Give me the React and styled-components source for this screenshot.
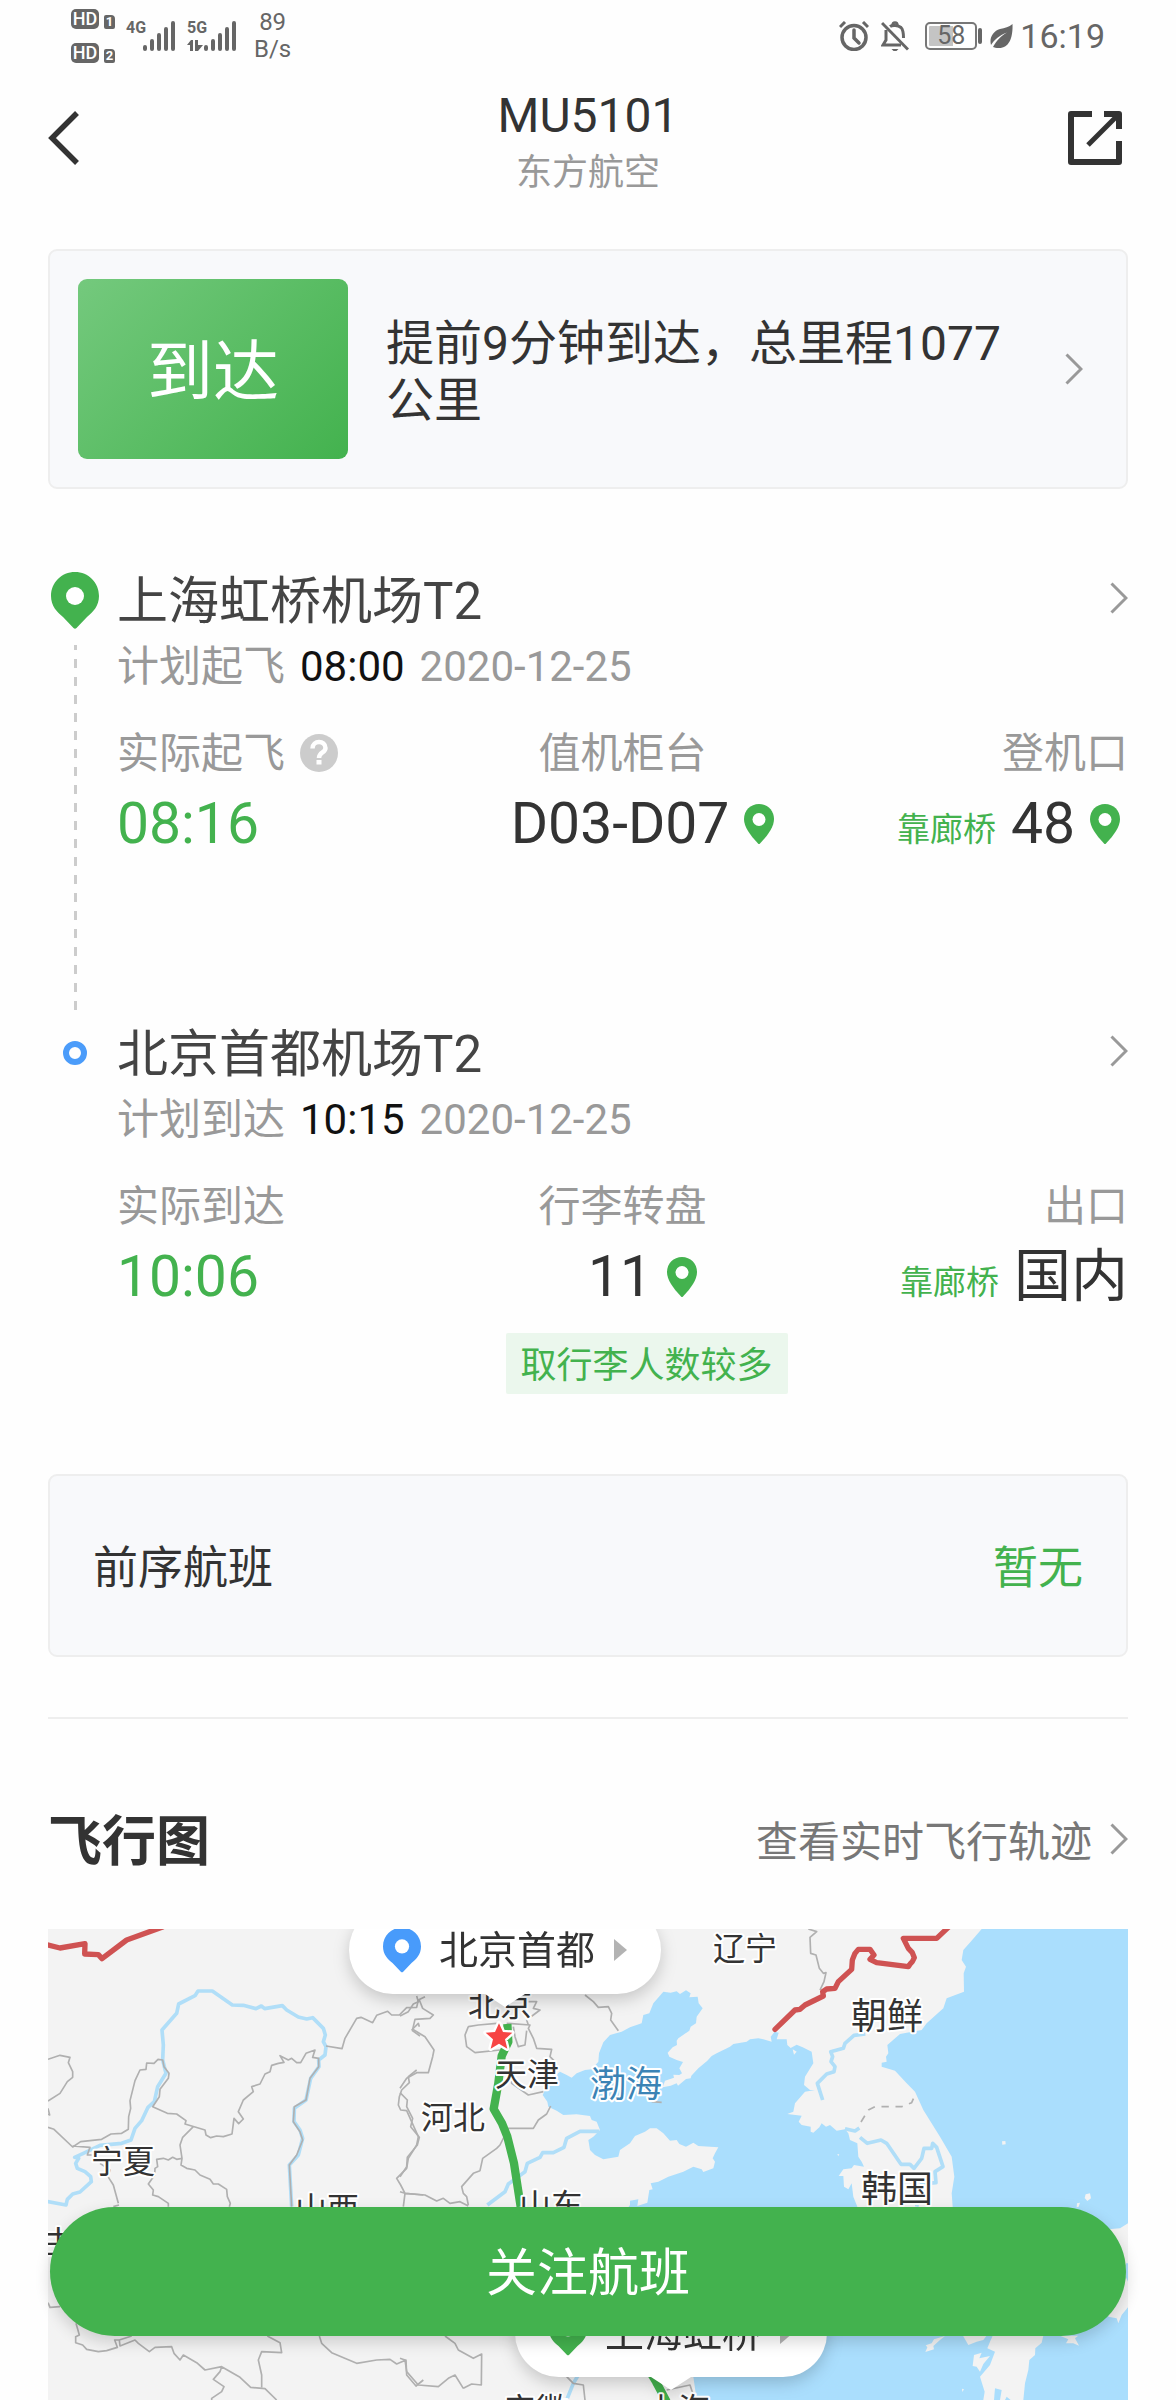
import React from "react";
import styled, { createGlobalStyle } from "styled-components";

const GREEN = "#43b24e";

function Chevron({ className }) {
  return (
    <svg className={className} width={18} height={32} viewBox="0 0 18 32" fill="none">
      <path d="M1.5 1.5L16 16L1.5 30.5" stroke="#999" strokeWidth={3} />
    </svg>
  );
}

function PlacePin() {
  return (
    <svg width={46} height={40} viewBox="0 0 46 40">
      <path
        d="M23 0C31.500 0 38 6.500 38 15C38 23 32 31 24 39.500Q23 40.500 22 39.500C14 31 8 23 8 15C8 6.500 14.500 0 23 0Z"
        fill={GREEN}
      />
      <circle cx={23} cy={15.500} r={6.500} fill="#fff" />
    </svg>
  );
}

function MapPin({ color, width, height }) {
  return (
    <svg width={width} height={height} viewBox="0 0 48 57">
      <path
        d="M24 0C37.500 0 48 10.500 48 24C48 34 42 40 36 45L25.500 56Q24 57.500 22.500 56L12 45C6 40 0 34 0 24C0 10.500 10.500 0 24 0Z"
        fill={color}
      />
      <circle cx={24} cy={24} r={9} fill="#fff" />
    </svg>
  );
}

function Signal() {
  return (
    <svg width={32} height={30} viewBox="0 0 32 30" fill="none">
      <path
        d="M2 26V28M9 20V28M16 14V28M23 8V28M30 2V28"
        stroke="#666"
        strokeWidth={4}
        strokeLinecap="round"
      />
    </svg>
  );
}

function AlarmIcon() {
  return (
    <svg width={30} height={30} viewBox="0 0 30 30" fill="none" stroke="#666">
      <circle cx={15} cy={16.500} r={12} strokeWidth={3.500} />
      <path d="M15 9V17L20 22" strokeWidth={3.500} strokeLinecap="round" />
      <path d="M1 6L6 1M29 6L24 1" strokeWidth={3} />
    </svg>
  );
}

function BellOffIcon() {
  return (
    <svg width={28} height={30} viewBox="0 0 28 30" fill="none" stroke="#666">
      <path d="M5 9V19L2 24H20M9 5.500C11 4 17 4 20 6.500C22 8.500 22.500 11 22.500 17" strokeWidth={3} />
      <path d="M11.500 4.500C11.500 0.500 16.500 0.500 16.500 4.500" strokeWidth={2.500} />
      <path d="M1 2L27 28.500" strokeWidth={3} />
      <path d="M10.500 28H17.500L15.500 30H12.500Z" fill="#666" stroke="none" />
    </svg>
  );
}

function LeafIcon() {
  return (
    <svg width={23} height={25} viewBox="0 0 23 25">
      <path
        d="M22.500 0C23 12 20 24 9 24C6 24 4 23.500 3 23C7 16 11 12 17 8.500C10 11 4 16 1 21C-1 14 3 7 10 5C15 4 19 3 22.500 0Z"
        fill="#666"
      />
    </svg>
  );
}

function ShareIcon() {
  return (
    <svg width={54} height={54} viewBox="0 0 54 54" fill="none" stroke="#333">
      <path d="M24 3H3V51H51V30" strokeWidth={6} strokeLinejoin="round" />
      <path d="M36 3H51V18" strokeWidth={6} strokeLinejoin="round" />
      <path d="M20 34L50 4" strokeWidth={5} />
    </svg>
  );
}

function HelpIcon() {
  return (
    <svg width={40} height={40} viewBox="0 0 40 40" fill="none">
      <circle cx={20} cy={19} r={19} fill="#ccc" />
      <path
        d="M13.500 14.500C13.500 6 26.500 6 26.500 14C26.500 19 20 18 20 24"
        stroke="#fff"
        strokeWidth={4.500}
      />
      <rect x={17.500} y={26} width={5} height={4.500} fill="#fff" />
    </svg>
  );
}

// Province borders, rivers and coast lines of the area between Ningxia and Kyushu
function MapDrawing() {
  return (
    <MapSvg viewBox="0 0 1080 471" preserveAspectRatio="xMidYMin slice">
      <g transform="scale(.33333333)" fill="none" strokeLinejoin="round">
        {/* seas */}
        <path
          transform="translate(1056 -57)"
          fill="#aadefd"
          d="M790 245L812 248L830 244L840 252L858 241L872 250L868 262L893 260L896 280L908 295L890 320L888 340L872 350L868 362L835 385L830 392L831 405L818 412L803 428L808 440L830 450L849 456L838 475L846 490L838 495L820 494L822 503L795 512L788 532L812 527L830 520L834 527L858 507L872 505L874 497L895 475L922 452L935 438L950 430L990 410L1000 402L1040 395L1050 388L1075 385L1090 388L1115 395L1112 380L1124 365L1136 368L1130 388L1160 388L1162 405L1172 414L1190 404L1208 412L1235 425L1240 460L1215 500L1212 525L1230 540L1245 540L1215 545L1185 580L1180 605L1162 612L1205 617L1196 635L1205 645L1232 650L1232 665L1240 668L1258 652L1265 640L1278 650L1290 645L1310 662L1335 658L1345 670L1350 690L1372 700L1375 740L1385 755L1392 770L1362 765L1355 775L1330 778L1316 798L1330 798L1332 830L1345 838L1355 820L1360 860L1372 890L1380 980L1400 1060L1540 1020L1630 960L1658 890L1655 850L1663 800L1655 740L1620 680L1570 600L1545 545L1520 520L1485 482L1445 470L1445 458L1460 455L1458 440L1465 430L1462 405L1500 372L1565 360L1580 340L1630 295L1640 265L1692 245L1691 190L1698 170L1685 150L1690 120L1712 95L1725 80L1745 57L2184 57V1470H890L880 1400L850 1277L780 1200L700 1100L650 940L690 885L690 872L715 868L712 888L742 878L748 840L758 838L752 820L775 815L805 800L850 785L880 770L905 778L910 786L940 775L945 755L938 745L945 730L955 712L895 708L880 698L858 710L838 702L830 690L810 692L790 670L770 655L750 655L735 665L705 678L690 700L660 720L655 740L610 748L585 735L570 720L565 690L580 680L600 660L590 635L575 630L570 618L530 613L490 615L470 602L445 590L442 575L428 555L440 530L460 500L480 485L500 495L515 503L530 490L555 480L575 478L595 455L597 430L610 397L630 375L665 365L690 352L725 340L730 315L748 310L760 280Z"
        />
        {/* south islands */}
        <g transform="translate(2196 -57)" fill="#f3f3f3">
          <path d="M638 1277H790L785 1298L766 1315L765 1335L748 1350L745 1380L735 1420L730 1470H692L680 1460L675 1470H660L665 1440L645 1435L642 1470H610L614 1445L600 1400L630 1365L645 1325L622 1315L630 1295Z" />
          <path d="M545 1270H625L610 1290L590 1295L565 1305L555 1288Z" />
          <path d="M582 1335L605 1328L598 1345L630 1338L610 1362L600 1385L590 1370L578 1368Z" />
          <path d="M495 1278L480 1290L460 1308L462 1318L448 1322L436 1326L442 1312L437 1306L455 1300L462 1288Z" />
          <path d="M840 1277H895L885 1285L897 1307L880 1300L858 1300L865 1288Z" />
          <path d="M1044 940L1020 955L985 958V1220L1010 1225L1015 1240L1025 1215L1044 1192V1115L1037 1100L1038 1060H1044Z" />
          <path d="M917 853L930 850L933 865L922 873L914 864Z" />
          <path d="M891 880L900 878L896 890L890 892Z" />
          <path d="M666 694L676 693L677 703L667 704Z" />
          <path d="M38 418L50 425L42 434Z" />
          <path d="M546 1436L552 1438L547 1446Z" />
          <path d="M172 732L178 733L175 739Z" />
        </g>
        {/* rivers */}
        <g stroke="#b0def8" strokeWidth={11}>
          <path
            transform="translate(-54 -57)"
            d="M50 874L108 885L112 868L128 852L150 846L184 815L182 800L165 785L142 775L137 760L146 745L134 742L160 730L210 706L275 700L303 690L315 655L335 632L354 592L373 575L383 530L408 490L398 450L400 405L396 360L440 310L446 282L495 257L504 243L547 243L607 285L640 286L678 296L694 288L704 296L757 287L770 300L805 321L830 327L848 323L880 355L886 375L880 395L888 410L885 435L866 450L867 470L842 505L828 570L793 595L792 635L810 660L818 685L805 735L778 765L785 890"
          />
          <path
            transform="translate(1056 -57)"
            d="M262 885L315 845L325 822L375 785L382 760L420 742L428 728L460 728L492 712L500 685L540 664L598 664M500 1470L520 1420L535 1395"
          />
          <path
            transform="translate(2196 -57)"
            d="M256 372L222 376L195 400L190 415L152 425L158 440L153 455L165 470L162 485L140 492L112 520L128 570M238 654L225 663L195 656M240 682L262 700L303 690L320 700L363 763L390 763L402 775L425 745L432 715L455 715L458 700L470 712L489 770L465 785L468 818L425 822L410 890"
          />
        </g>
        {/* province borders */}
        <g stroke="#b0b0b0" strokeWidth={5}>
          <path
            transform="translate(-54 -57)"
            d="M54 448L90 436L120 442L115 458L128 485V502L112 515L90 550L54 573M54 595L59 615L54 612M54 652L72 658L128 711L152 695L215 688L243 672L275 670L295 658L296 620L302 595L300 572L315 512L330 480L348 478L350 459L372 460L384 448L398 450L402 470L417 490L415 505L390 538L388 560L368 590L412 610L440 612L468 632L465 642L525 660L528 675L542 683L560 678L580 680L606 672L612 625L626 641L640 627L625 605L640 570L670 545L665 530L690 522L705 492L720 485L725 466L745 460L762 457L750 437L775 450L785 445L800 458L812 458L828 430L855 420L848 442L866 445L866 470L840 505L828 570L793 590L790 635L810 665L818 690L800 735L778 765L785 890M888 408L936 416L945 385L980 325L993 322L1028 338L1040 316L1073 304L1085 315L1108 315L1130 293L1160 292L1165 270L1185 260M128 708L180 712L172 735L185 735M210 760L240 780L234 800L250 825L265 880M250 890L267 885M490 650L458 682L450 705L456 745L440 748L428 742L415 750L400 745L380 748L383 770L375 775L374 795L355 822L370 840L368 855L385 860L415 880V890M456 745L453 765L470 775L495 780L510 795L540 808L550 822L565 822L590 838L592 860L601 880L598 890M1160 480L1135 500L1138 518L1115 540L1108 560L1105 585L1112 600L1130 602L1165 680L1160 705L1135 745L1130 775L1100 805L1112 825L1125 850L1180 855M1125 850L1120 890M1145 360L1165 340L1168 350M1145 360L1170 378"
          />
          <path
            transform="translate(-54 -57)"
            d="M54 1178L60 1192L90 1190M138 1240L148 1275L137 1280V1298L158 1305L170 1318L205 1325L230 1322L262 1312L254 1290H268L270 1308L315 1290L325 1300L358 1325L375 1312L425 1310L432 1330L450 1350L460 1335L500 1358L525 1380L575 1370L630 1402L662 1432L705 1436L740 1470M268 1290L305 1278M575 1370L570 1385L550 1408L582 1430L575 1445L545 1465V1470M695 1432V1395L685 1350L695 1325L755 1328L750 1298L712 1278M868 1278L875 1300L905 1328L980 1360L1040 1350L1080 1348L1100 1362L1128 1350L1130 1395L1158 1428L1180 1410"
          />
          <path
            transform="translate(1056 -57)"
            d="M50 258L55 275L40 282L25 305L0 318M58 270L68 295L100 315L90 325L45 328L38 358L75 380L102 420L98 440L85 488H50L20 505L0 535M0 548L22 570L20 590L38 625L32 650L58 682L52 705L22 742L20 770L0 800M0 845L15 850L75 855L110 873L130 865L150 880L180 875L205 888M205 885L200 860L190 850L185 830L220 790L240 782L248 745L290 715L300 705L325 655H400L415 630L440 612L452 588M205 350L235 345L290 340M205 350L195 375L200 410L225 428L300 420M320 340L390 345L385 355L400 385L410 415L455 418L450 440L470 460M340 350L345 380L355 410L375 405L380 362M330 460L335 520L385 555L430 545M385 275L410 275L400 295L420 300L380 330L385 345M555 255L580 275L595 292L625 290L635 310L632 330L655 362M135 1278L165 1300L175 1320L220 1345L245 1332L244 1425L215 1422L190 1435M0 1345L15 1350L20 1385L55 1425L115 1430L145 1405L165 1395L190 1435M500 1400L520 1420L550 1425L555 1470M800 1440L870 1425L880 1455M755 575L785 577"
          />
          <path
            transform="translate(2196 -57)"
            d="M85 57L110 65L90 82L92 130L108 135L118 175L130 190L138 188L132 215L120 240"
          />
          <path
            transform="translate(2196 -57)"
            strokeDasharray="22 20"
            d="M243 636L265 600L285 590L365 590L395 578L408 548"
          />
        </g>
        {/* state borders */}
        <g stroke="#cf5252" strokeWidth={16}>
          <path transform="translate(-54 -57)" d="M50 104L90 114L165 101L164 132L205 134L216 146L290 90L400 50" />
          <path
            transform="translate(2196 -57)"
            strokeLinecap="round"
            d="M-15 358L45 300L60 298L75 285L130 258L128 245L140 237L165 235L175 215L215 178L217 150L225 130L235 118L270 118L282 135L270 148L290 158L385 170L392 160L397 155L403 143L397 128L385 115L370 85H470L505 52"
          />
        </g>
        {/* flight track */}
        <g transform="translate(1056 -57)" stroke={GREEN} strokeWidth={25}>
          <path d="M322 342L325 395L305 438L295 520L281 597L306 640L322 680L342 760L362 890" />
          <path d="M740 1370L768 1415L800 1475" />
        </g>
        <path
          transform="translate(1353 323)"
          d="M0-40L12-14L40-12L18 8L25 36L0 21L-25 36L-18 8L-40-12L-12-14Z"
          fill="#f74545"
          stroke="#fff"
          strokeWidth={14}
          paintOrder="stroke"
        />
      </g>
      <MapText x={43} y={244}>宁夏</MapText>
      <MapText x={247} y={291}>山西</MapText>
      <MapText x={-13} y={325}>甘肃</MapText>
      <MapText x={420} y={87}>北京</MapText>
      <MapText x={447} y={157}>天津</MapText>
      <MapText x={373} y={200}>河北</MapText>
      <MapText x={471} y={288}>山东</MapText>
      <MapText x={665} y={31}>辽宁</MapText>
      <MapText x={456} y={492}>安徽</MapText>
      <MapText x={598} y={492}>上海</MapText>
      <MapText x={803} y={100} $large>朝鲜</MapText>
      <MapText x={813} y={273} $large>韩国</MapText>
      <MapText x={542} y={168} $large $sea>渤海</MapText>
    </MapSvg>
  );
}

function AirportCallout({ name, color, left, top }) {
  return (
    <Callout type="button" $left={left} $top={top}>
      <MapPin color={color} width={38} height={46} />
      <CalloutName>{name}</CalloutName>
      <svg width={13} height={22} viewBox="0 0 13 22">
        <path d="M0 0L13 11L0 22Z" fill="#b3b3b3" />
      </svg>
    </Callout>
  );
}

function Stop({ airport, plan, time, date, first, children }) {
  return (
    <StopRow $first={first}>
      <Rail>
        {first ? <MapPin color={GREEN} width={48} height={57} /> : <Ring />}
        {first && <Dashes />}
      </Rail>
      <div>
        <StopLink href="#airport">
          {airport}
          <RowChevron />
        </StopLink>
        <Schedule>
          <span>{plan}</span>
          <PlannedTime>{time}</PlannedTime>
          <span>{date}</span>
        </Schedule>
        <Facts>{children}</Facts>
      </div>
    </StopRow>
  );
}

export default function App() {
  return (
    <Page>
      <GlobalStyle />
      <StatusBar>
        <HdStack>
          <HdLine><Hd>HD</Hd><Sim>1</Sim></HdLine>
          <HdLine><Hd>HD</Hd><Sim>2</Sim></HdLine>
        </HdStack>
        <Network>4G</Network>
        <Signal />
        <Network $second>
          5G
          <svg width={16} height={11} viewBox="0 0 16 11" fill="#666">
            <path d="M0 5L4 0H6V11H3V5ZM8 0H11V5H16L11 11H8Z" />
          </svg>
        </Network>
        <Signal />
        <Speed>
          89
          <br />
          B/s
        </Speed>
        <StatusRight>
          <AlarmIcon />
          <BellOffIcon />
          <Battery>58</Battery>
          <LeafIcon />
          <Clock>16:19</Clock>
        </StatusRight>
      </StatusBar>

      <Header>
        <IconButton type="button" aria-label="返回">
          <svg width={32} height={54} viewBox="0 0 32 54" fill="none">
            <path d="M29 2L4 27L29 52" stroke="#333" strokeWidth={5.500} />
          </svg>
        </IconButton>
        <Titles>
          <FlightNo>MU5101</FlightNo>
          <Airline>东方航空</Airline>
        </Titles>
        <IconButton type="button" aria-label="分享" $end>
          <ShareIcon />
        </IconButton>
      </Header>

      <Content>
        <StatusCard href="#status">
          <StatusBadge>到达</StatusBadge>
          <StatusText>提前9分钟到达，总里程1077公里</StatusText>
          <Chevron />
        </StatusCard>

        <Timeline>
          <Stop first airport="上海虹桥机场T2" plan="计划起飞" time="08:00" date="2020-12-25">
            <Fact>
              <Label>
                实际起飞
                <HelpIcon />
              </Label>
              <Value $green>08:16</Value>
            </Fact>
            <Fact $middle>
              <Label>值机柜台</Label>
              <Value>
                D03-D07
                <PlacePin />
              </Value>
            </Fact>
            <Fact $right>
              <Label>登机口</Label>
              <Value>
                <Bridge>靠廊桥</Bridge>
                48
                <PlacePin />
              </Value>
            </Fact>
          </Stop>
          <Stop airport="北京首都机场T2" plan="计划到达" time="10:15" date="2020-12-25">
            <Fact>
              <Label>实际到达</Label>
              <Value $green>10:06</Value>
            </Fact>
            <Fact $middle>
              <Label>行李转盘</Label>
              <Value>
                11
                <PlacePin />
              </Value>
              <Tag>取行李人数较多</Tag>
            </Fact>
            <Fact $right>
              <Label>出口</Label>
              <Value>
                <Bridge>靠廊桥</Bridge>
                国内
              </Value>
            </Fact>
          </Stop>
        </Timeline>

        <PreviousCard>
          <span>前序航班</span>
          <PreviousValue>暂无</PreviousValue>
        </PreviousCard>

        <Divider />

        <SectionHead>
          <SectionTitle>飞行图</SectionTitle>
          <TrackLink href="#track">
            查看实时飞行轨迹
            <RowChevron />
          </TrackLink>
        </SectionHead>

        <MapBox>
          <MapDrawing />
          <AirportCallout name="北京首都" color="#489bfb" left={301} top={-23} />
          <AirportCallout name="上海虹桥" color={GREEN} left={467} top={360} />
        </MapBox>
      </Content>

      <FollowButton type="button">关注航班</FollowButton>
    </Page>
  );
}

const GlobalStyle = createGlobalStyle`
  * {
    box-sizing: border-box;
  }

  body {
    margin: 0;
    background: #fefefe;
    color: #333;
    font-family: Roboto, "Noto Sans CJK SC", sans-serif;
  }

  button {
    padding: 0;
    border: 0;
    background: none;
    color: inherit;
    font-family: inherit;
    cursor: pointer;
  }

  a {
    color: inherit;
    text-decoration: none;
  }

  svg {
    display: block;
    flex-shrink: 0;
  }
`;

const Page = styled.div`
  display: flex;
  flex-direction: column;
  min-height: 100vh;
`;

const StatusBar = styled.div`
  display: flex;
  align-items: center;
  height: 72px;
  padding: 0 71px;
  color: #666;
`;

const HdStack = styled.div`
  display: flex;
  flex-direction: column;
  gap: 14px;
  margin-right: 11px;
`;

const HdLine = styled.div`
  display: flex;
  align-items: flex-end;
  gap: 5px;
`;

const Hd = styled.span`
  width: 28px;
  border-radius: 5px;
  background: #666;
  color: #fff;
  font-size: 18px;
  font-weight: 500;
  line-height: 20px;
  text-align: center;
`;

const Sim = styled.span`
  width: 11px;
  border-radius: 2px 4px 2px 2px;
  background: #666;
  color: #fff;
  font-size: 13px;
  font-weight: 700;
  line-height: 14px;
  text-align: center;
`;

const Network = styled.span`
  display: flex;
  flex-direction: column;
  gap: 4px;
  align-self: flex-start;
  width: 17px;
  margin-top: 20px;
  margin-left: ${({ $second }) => ($second ? "12px" : "0")};
  font-size: 16px;
  font-weight: 700;
  line-height: 16px;
`;

const Speed = styled.span`
  margin-left: 18px;
  font-size: 24px;
  line-height: 27px;
  text-align: center;
`;

const StatusRight = styled.div`
  display: flex;
  align-items: center;
  gap: 7px;
  margin-left: auto;

  svg:first-child {
    margin-right: 5px;
  }
`;

const Battery = styled.span`
  position: relative;
  width: 52px;
  height: 28px;
  margin: 0 6px 0 9px;
  border: 2px solid #777;
  border-radius: 5px;
  background: linear-gradient(to right, #c4c4c4 55%, #fff 55%) content-box;
  padding: 2px;
  font-size: 25px;
  line-height: 20px;
  text-align: center;

  &::after {
    content: "";
    position: absolute;
    top: 4px;
    right: -7px;
    width: 4px;
    height: 16px;
    border-radius: 2px;
    background: #666;
  }
`;

const Clock = styled.span`
  font-size: 34px;
  line-height: 40px;
`;

const Header = styled.header`
  display: grid;
  grid-template-columns: 1fr auto 1fr;
  align-items: center;
  padding: 6px 48px 0;
`;

const IconButton = styled.button`
  justify-self: ${({ $end }) => ($end ? "end" : "start")};
  padding: 0 ${({ $end }) => ($end ? "6px" : "0")};
`;

const Titles = styled.div`
  padding-top: 6px;
  text-align: center;
`;

const FlightNo = styled.h1`
  margin: 0;
  font-size: 48px;
  font-weight: 400;
  line-height: 64px;
`;

const Airline = styled.div`
  color: #999;
  font-size: 36px;
  line-height: 50px;
`;

const Content = styled.main`
  display: flex;
  flex: 1;
  flex-direction: column;
  padding: 51px 48px 0;
`;

const StatusCard = styled.a`
  display: flex;
  align-items: center;
  gap: 38px;
  padding: 28px 43px 28px 28px;
  border: 2px solid #eee;
  border-radius: 9px;
  background: #f8f9fb;
`;

const StatusBadge = styled.span`
  flex: 0 0 270px;
  padding-top: 8px;
  border-radius: 9px;
  background: linear-gradient(135deg, #74c97d, ${GREEN});
  color: #fff;
  font-size: 66px;
  line-height: 172px;
  text-align: center;
`;

const StatusText = styled.span`
  flex: 1;
  padding-top: 6px;
  font-size: 48px;
  line-height: 57px;
`;

const Timeline = styled.section`
  margin-top: 83px;
`;

const StopRow = styled.div`
  display: grid;
  grid-template-columns: 54px 1fr;
  gap: 15px;

  > div:last-child {
    padding-bottom: ${({ $first }) => ($first ? "165px" : "0")};
  }
`;

const Rail = styled.div`
  display: flex;
  flex-direction: column;
  align-items: center;
`;

const Dashes = styled.span`
  flex: 1;
  width: 3px;
  margin: 16px 0 15px;
  background: repeating-linear-gradient(
    to bottom,
    #ccc 0 5px,
    transparent 5px 14px,
    #ccc 14px 18px
  );
`;

const Ring = styled.span`
  width: 24px;
  height: 24px;
  margin-top: 16px;
  border: 6px solid #4b9cfa;
  border-radius: 50%;
`;

const RowChevron = styled(Chevron)`
  box-sizing: content-box;
  padding-bottom: 8px;
`;

const StopLink = styled.a`
  display: flex;
  align-items: center;
  justify-content: space-between;
  color: #444;
  font-size: 51px;
  line-height: 60px;
`;

const Schedule = styled.div`
  display: flex;
  gap: 15px;
  margin-top: 5px;
  color: #999;
  font-size: 42px;
  line-height: 60px;
`;

const PlannedTime = styled.span`
  color: #111;
`;

const Facts = styled.div`
  display: grid;
  grid-template-columns: 8fr 6fr 7fr;
  margin-top: 27px;
`;

const Label = styled.div`
  display: flex;
  align-items: center;
  gap: 14px;
  color: #999;
  font-size: 42px;
  line-height: 60px;
`;

const Fact = styled.div`
  display: flex;
  flex-direction: column;
  gap: 4px;
  align-items: ${({ $middle, $right }) =>
    $middle ? "center" : $right ? "flex-end" : "flex-start"};
  white-space: nowrap;

  ${Label} {
    padding-right: ${({ $middle }) => ($middle ? "48px" : "0")};
  }
`;

const Value = styled.div`
  display: flex;
  align-items: center;
  gap: 7px;
  color: ${({ $green }) => ($green ? GREEN : "#333")};
  font-size: 57px;
  line-height: 72px;
`;

const Bridge = styled.span`
  align-self: flex-end;
  margin-right: 8px;
  color: ${GREEN};
  font-size: 33px;
  line-height: 60px;
`;

const Tag = styled.div`
  margin-top: 16px;
  padding: 5px 15px 0;
  border-radius: 2px;
  background: #ebf7ed;
  color: ${GREEN};
  font-size: 36px;
  line-height: 56px;
`;

const PreviousCard = styled.div`
  display: flex;
  justify-content: space-between;
  margin-top: 80px;
  padding: 63px 43px 56px;
  border: 2px solid #eee;
  border-radius: 9px;
  background: #f8f9fb;
  font-size: 45px;
  line-height: 60px;
`;

const PreviousValue = styled.span`
  color: ${GREEN};
`;

const Divider = styled.hr`
  width: 100%;
  height: 2px;
  margin: 60px 0 0;
  border: 0;
  background: #eee;
`;

const SectionHead = styled.div`
  display: flex;
  align-items: center;
  justify-content: space-between;
  margin: 88px 0 50px;
`;

const SectionTitle = styled.h2`
  margin: 0;
  font-size: 54px;
  font-weight: 700;
  line-height: 72px;
`;

const TrackLink = styled.a`
  display: flex;
  align-items: center;
  gap: 18px;
  color: #777;
  font-size: 42px;
  line-height: 60px;
`;

const MapBox = styled.div`
  position: relative;
  flex: 1;
  min-height: 471px;
  overflow: hidden;
  background: #f3f3f3;
`;

const MapSvg = styled.svg`
  position: absolute;
  inset: 0;
  width: 100%;
  height: 100%;
`;

const MapText = styled.text`
  fill: ${({ $sea }) => ($sea ? "#3b83b5" : "#333")};
  stroke: #fff;
  stroke-width: 4px;
  stroke-linejoin: round;
  paint-order: stroke;
  font-size: ${({ $large }) => ($large ? "36px" : "32px")};
`;

const Callout = styled.button`
  position: absolute;
  top: ${({ $top }) => $top}px;
  left: ${({ $left }) => $left}px;
  display: flex;
  align-items: center;
  height: 88px;
  padding: 0 34px;
  border-radius: 44px;
  background: #fff;
  filter: drop-shadow(0 6px 8px rgba(0, 0, 0, 0.18));

  &::after {
    content: "";
    position: absolute;
    top: 100%;
    left: 50%;
    margin-left: -20px;
    border: 20px solid transparent;
    border-top: 13px solid #fff;
    border-bottom: 0;
  }
`;

const CalloutName = styled.span`
  margin: 0 19px 0 18px;
  padding-top: 2px;
  font-size: 39px;
  line-height: 60px;
`;

const FollowButton = styled.button`
  position: fixed;
  right: 50px;
  bottom: 64px;
  left: 50px;
  padding-top: 5px;
  border-radius: 65px;
  background: ${GREEN};
  box-shadow: 0 6px 16px rgba(0, 0, 0, 0.16);
  color: #fff;
  font-size: 51px;
  line-height: 124px;
`;
